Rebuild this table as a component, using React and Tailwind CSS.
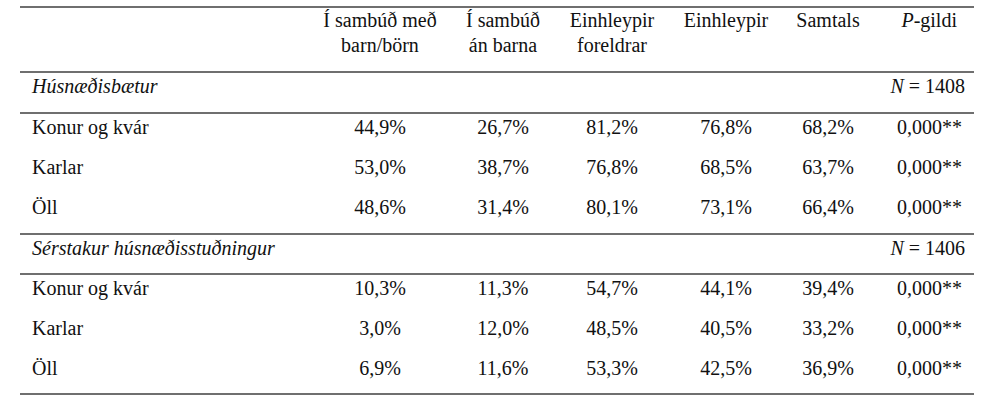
import React from "react";

function DataRow({ label, values, p, h }) {
  return (
    <div className={`flex items-start pt-[1px] leading-[24px] ${h}`}>
      <div className="w-[300px] pl-[12px]">{label}</div>
      <div className="w-[120px] text-center">{values[0]}</div>
      <div className="w-[126px] text-center">{values[1]}</div>
      <div className="w-[92px] text-center">{values[2]}</div>
      <div className="w-[136px] text-center">{values[3]}</div>
      <div className="w-[68px] text-center">{values[4]}</div>
      <div className="w-[112px] text-right pr-[12px]">{p}</div>
    </div>
  );
}

function SectionRow({ title, n, h }) {
  return (
    <div className={`flex items-start justify-between pt-[1px] leading-[24px] border-b-2 border-[#6f6f6f] ${h}`}>
      <div className="pl-[12px] italic">{title}</div>
      <div className="pr-[9px]">
        <span className="italic">N</span> = {n}
      </div>
    </div>
  );
}

export default function App() {
  return (
    <div className="w-[1000px] h-[410px] bg-white text-[#111] text-[20px] font-['Liberation_Serif']">
      <div className="ml-[20px] w-[954px] pt-[6px]">
        <div className="border-t-2 border-[#6f6f6f]">
          <div className="flex items-start h-[65px] leading-[25px] border-b-2 border-[#6f6f6f]">
            <div className="w-[300px]"></div>
            <div className="w-[120px] text-center">
              Í sambúð með
              <br />
              barn/börn
            </div>
            <div className="w-[126px] text-center">
              Í sambúð
              <br />
              án barna
            </div>
            <div className="w-[92px] text-center">
              Einhleypir
              <br />
              foreldrar
            </div>
            <div className="w-[136px] text-center">Einhleypir</div>
            <div className="w-[68px] text-center">Samtals</div>
            <div className="w-[112px] text-right pr-[17px]">
              <span className="italic">P</span>-gildi
            </div>
          </div>

          <SectionRow title="Húsnæðisbætur" n="1408" h="h-[41px]" />
          <div className="border-b-2 border-[#6f6f6f]">
            <DataRow label="Konur og kvár" values={["44,9%", "26,7%", "81,2%", "76,8%", "68,2%"]} p="0,000**" h="h-[40px]" />
            <DataRow label="Karlar" values={["53,0%", "38,7%", "76,8%", "68,5%", "63,7%"]} p="0,000**" h="h-[40px]" />
            <DataRow label="Öll" values={["48,6%", "31,4%", "80,1%", "73,1%", "66,4%"]} p="0,000**" h="h-[39px]" />
          </div>

          <SectionRow title="Sérstakur húsnæðisstuðningur" n="1406" h="h-[40px]" />
          <div className="border-b-2 border-[#6f6f6f]">
            <DataRow label="Konur og kvár" values={["10,3%", "11,3%", "54,7%", "44,1%", "39,4%"]} p="0,000**" h="h-[40px]" />
            <DataRow label="Karlar" values={["3,0%", "12,0%", "48,5%", "40,5%", "33,2%"]} p="0,000**" h="h-[40px]" />
            <DataRow label="Öll" values={["6,9%", "11,6%", "53,3%", "42,5%", "36,9%"]} p="0,000**" h="h-[38px]" />
          </div>
        </div>
      </div>
    </div>
  );
}
